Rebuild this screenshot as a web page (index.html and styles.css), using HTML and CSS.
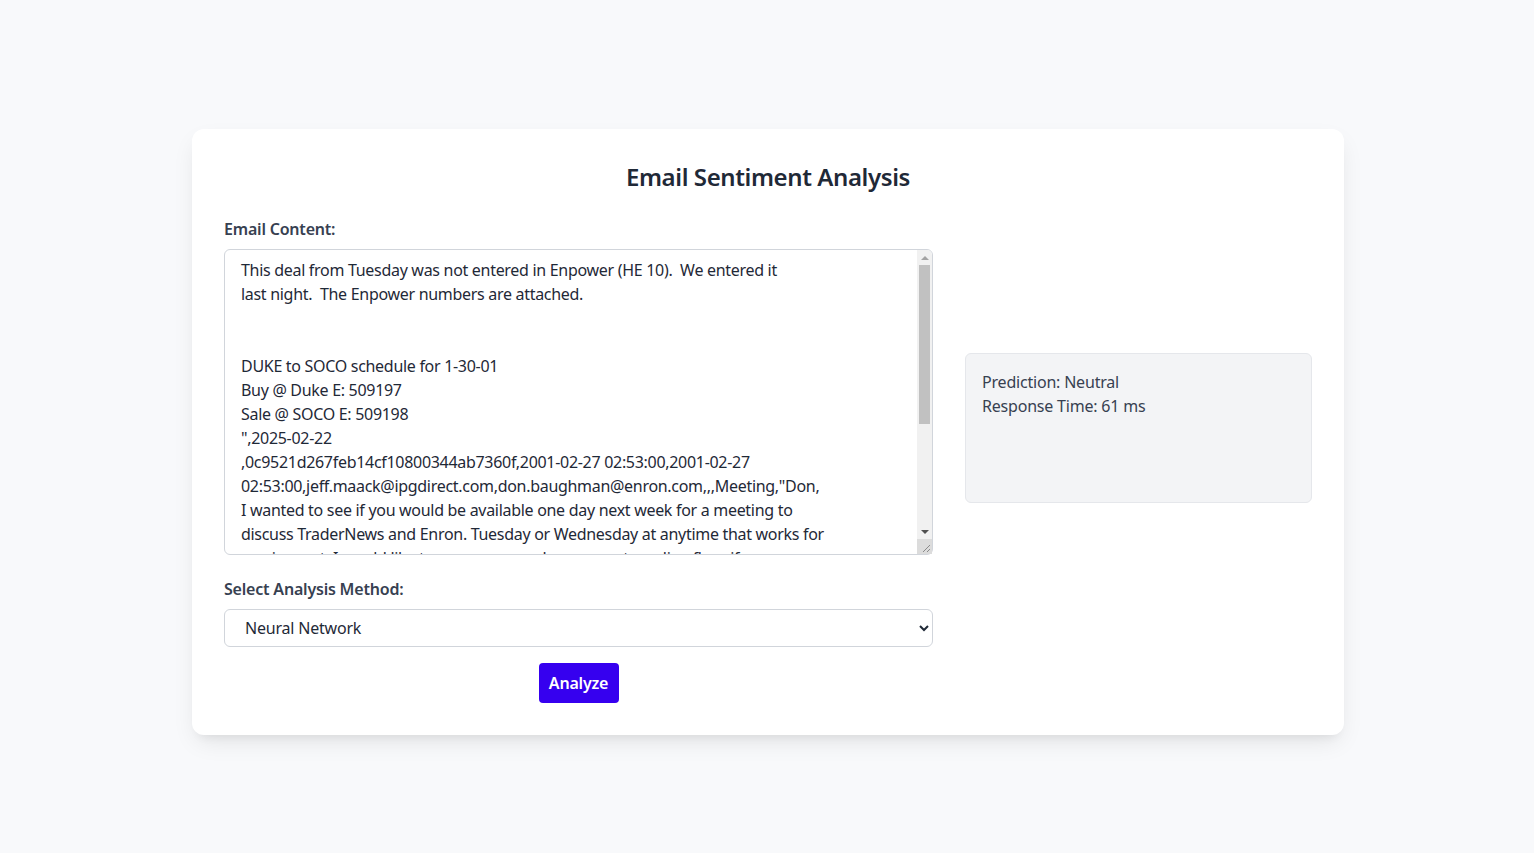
FILE: index.html
```html
<!DOCTYPE html>
<html lang="en">
<head>
<meta charset="utf-8">
<title>Email Sentiment Analysis</title>
<link rel="stylesheet" href="styles.css">
</head>
<body>
<main class="page">
  <section class="card">
    <h1 class="title">Email Sentiment Analysis</h1>
    <div class="grid">
      <div class="form">
        <label class="label" for="email">Email Content:</label>
        <div class="textarea-wrap">
          <textarea id="email" class="textarea">This deal from Tuesday was not entered in Enpower (HE 10).  We entered it
last night.  The Enpower numbers are attached.


DUKE to SOCO schedule for 1-30-01
Buy @ Duke E: 509197
Sale @ SOCO E: 509198
",2025-02-22
,0c9521d267feb14cf10800344ab7360f,2001-02-27 02:53:00,2001-02-27
02:53:00,jeff.maack@ipgdirect.com,don.baughman@enron.com,,,Meeting,"Don,
I wanted to see if you would be available one day next week for a meeting to
discuss TraderNews and Enron. Tuesday or Wednesday at anytime that works for
you is great. I would like to go over our volume reports, online flow, if
possible. Please let me know what time works best for you.

Thanks,
Jeff Maack
TraderNews
",2025-02-22
</textarea>
          <div class="fake-scroll" aria-hidden="true">
            <span class="arrow arrow-up"></span>
            <span class="thumb"></span>
            <span class="track-rest"></span>
            <span class="arrow arrow-down"></span>
            <span class="resizer">
              <svg width="15" height="15" viewBox="0 0 15 15"><path d="M13 6 L6 13 M13 10 L10 13" stroke="#8a8a8a" stroke-width="1" fill="none"/></svg>
            </span>
          </div>
        </div>
        <label class="label label-select" for="method">Select Analysis Method:</label>
        <select id="method" class="select">
          <option>Neural Network</option>
          <option>Naive Bayes</option>
          <option>Logistic Regression</option>
        </select>
        <div class="actions">
          <button class="button" type="button">Analyze</button>
        </div>
      </div>
      <div class="side">
        <div class="result">
          <p>Prediction: Neutral</p>
          <p>Response Time: 61 ms</p>
        </div>
      </div>
    </div>
  </section>
</main>
</body>
</html>
```

FILE: styles.css
```css
* { box-sizing: border-box; }

html, body {
  margin: 0;
  padding: 0;
}

body {
  background: #f8f9fb;
  font-family: "Noto Sans", "Open Sans", sans-serif;
  color: #374151;
  font-size: 16px;
  line-height: 24px;
}

.page {
  min-height: 853px;
  display: flex;
  justify-content: center;
  padding: 129px 0 0 2px;
}

.card {
  width: 1152px;
  height: 606px;
  background: #ffffff;
  border-radius: 12px;
  padding: 32px;
  box-shadow: 0 10px 25px -5px rgba(0, 0, 0, 0.10), 0 8px 10px -6px rgba(0, 0, 0, 0.06);
}

.title {
  margin: 0 0 24px;
  text-align: center;
  font-size: 24px;
  line-height: 32px;
  font-weight: 600;
  color: #1f2937;
  letter-spacing: -0.4px;
}

.grid {
  display: grid;
  grid-template-columns: 709px 347px;
  column-gap: 32px;
}

.form {
  display: flex;
  flex-direction: column;
}

.label {
  display: block;
  font-weight: 600;
  color: #374151;
  margin-bottom: 8px;
  font-size: 16px;
  line-height: 24px;
  letter-spacing: -0.2px;
}

.label-select {
  margin-top: 22px;
}

.textarea-wrap {
  position: relative;
}

.textarea {
  display: block;
  width: 100%;
  height: 306px;
  padding: 8px 31px 8px 16px;
  border: 1px solid #d1d5db;
  border-radius: 6px;
  font-family: inherit;
  font-size: 16px;
  line-height: 24px;
  letter-spacing: -0.3px;
  color: #1f2937;
  resize: none;
  overflow: hidden;
  background: #fff;
}

.fake-scroll {
  position: absolute;
  top: 1px;
  right: 1px;
  bottom: 1px;
  width: 15px;
  background: #f1f1f1;
  display: flex;
  flex-direction: column;
  border-top-right-radius: 5px;
  overflow: hidden;
}

.arrow {
  height: 15px;
  flex: none;
  display: flex;
  align-items: center;
  justify-content: center;
}

.arrow::before {
  content: "";
  width: 0;
  height: 0;
  border-left: 4px solid transparent;
  border-right: 4px solid transparent;
}

.arrow-up::before {
  border-bottom: 4px solid #a3a3a3;
}

.arrow-down::before {
  border-top: 4px solid #505050;
}

.thumb {
  flex: none;
  height: 159px;
  margin: 0 2px;
  background: #c1c1c1;
}

.track-rest {
  flex: 1;
}

.resizer {
  flex: none;
  height: 15px;
  background: #dcdcdc;
  display: block;
}

.resizer svg {
  display: block;
}

.select {
  display: block;
  width: 100%;
  height: 38px;
  padding: 0 12px 0 16px;
  border: 1px solid #d1d5db;
  border-radius: 6px;
  font-family: inherit;
  font-size: 16px;
  letter-spacing: -0.2px;
  color: #1f2937;
  background: #fff;
}

.actions {
  display: flex;
  justify-content: center;
  margin-top: 16px;
}

.button {
  width: 80px;
  height: 40px;
  border: none;
  border-radius: 4px;
  background: #3600ef;
  color: #fff;
  font-family: inherit;
  font-size: 16px;
  font-weight: 600;
  letter-spacing: -0.2px;
  cursor: pointer;
}

.side {
  padding-top: 136px;
}

.result {
  height: 150px;
  background: #f3f4f6;
  border: 1px solid #e5e7eb;
  border-radius: 6px;
  padding: 16px;
  color: #374151;
  letter-spacing: -0.2px;
}

.result p {
  margin: 0;
}
```
